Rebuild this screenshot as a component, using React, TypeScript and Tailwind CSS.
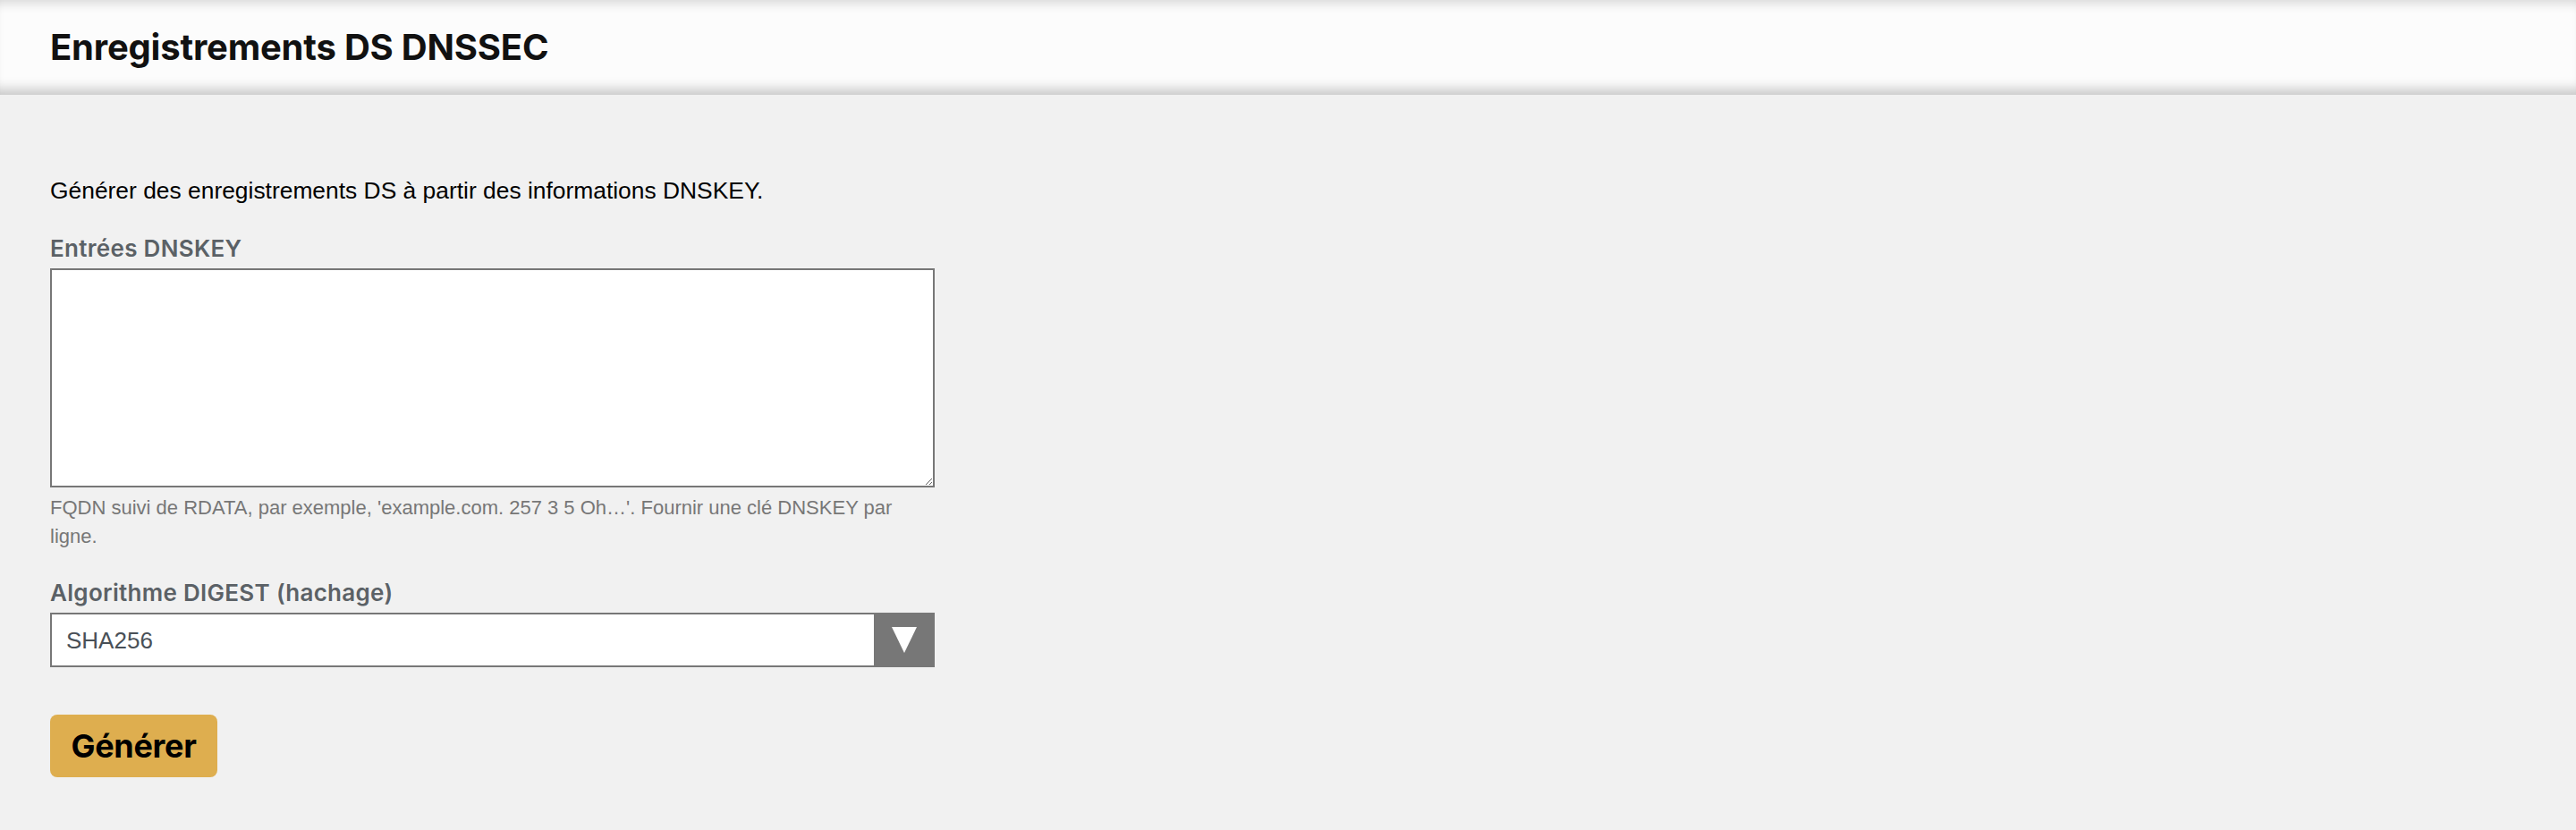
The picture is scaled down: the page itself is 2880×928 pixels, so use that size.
import React from "react";

export default function App() {
  return (
    <div className="min-h-[928px] w-full bg-[#f1f1f1]">
      <header className="flex h-[106px] items-center bg-[#fcfcfc] pl-[56px] shadow-[inset_0_14px_12px_-10px_rgba(0,0,0,0.14),inset_0_-16px_14px_-10px_rgba(0,0,0,0.22)]">
        <h1 className="font-['Inter',sans-serif] text-[40px] font-bold leading-[48px] tracking-[-0.2px] text-[#111]">
          Enregistrements DS DNSSEC
        </h1>
      </header>
      <main className="flex flex-col items-start pl-[56px] pt-[92px]">
        <p className="font-['Liberation_Sans',Arial,sans-serif] text-[26.4px] leading-[30px] text-black">
          Générer des enregistrements DS à partir des informations DNSKEY.
        </p>
        <label className="mt-[34px] font-['Inter',sans-serif] text-[26px] font-semibold leading-[32px] tracking-[0.3px] text-[#5b6166]">
          Entrées DNSKEY
        </label>
        <textarea className="mt-[6px] h-[245px] w-[989px] resize border-2 border-[#777] bg-white" />
        <p className="mt-[7px] w-[989px] font-['Liberation_Sans',Arial,sans-serif] text-[22px] leading-[32px] text-[#777]">
          FQDN suivi de RDATA, par exemple, 'example.com. 257 3 5 Oh…'. Fournir une clé DNSKEY par ligne.
        </p>
        <label className="mt-[31px] font-['Inter',sans-serif] text-[26px] font-semibold leading-[32px] tracking-[0.3px] text-[#5b6166]">
          Algorithme DIGEST (hachage)
        </label>
        <div className="relative mt-[6px] flex h-[61px] w-[989px] items-center border-2 border-[#777] bg-white pl-[16px]">
          <span className="font-['Liberation_Sans',Arial,sans-serif] text-[26px] leading-[30px] text-[#495057]">
            SHA256
          </span>
          <div className="absolute right-[-2px] top-[-2px] flex h-[61px] w-[68px] items-center justify-center bg-[#777]">
            <svg width="28" height="29" viewBox="0 0 28 29">
              <polygon points="0,0 28,0 14,29" fill="#fff" />
            </svg>
          </div>
        </div>
        <button className="mt-[53px] flex h-[70px] w-[187px] items-center justify-center rounded-[8px] bg-[#deae4f] font-['Inter',sans-serif] text-[36px] font-bold tracking-[-0.3px] text-black">
          Générer
        </button>
      </main>
    </div>
  );
}
